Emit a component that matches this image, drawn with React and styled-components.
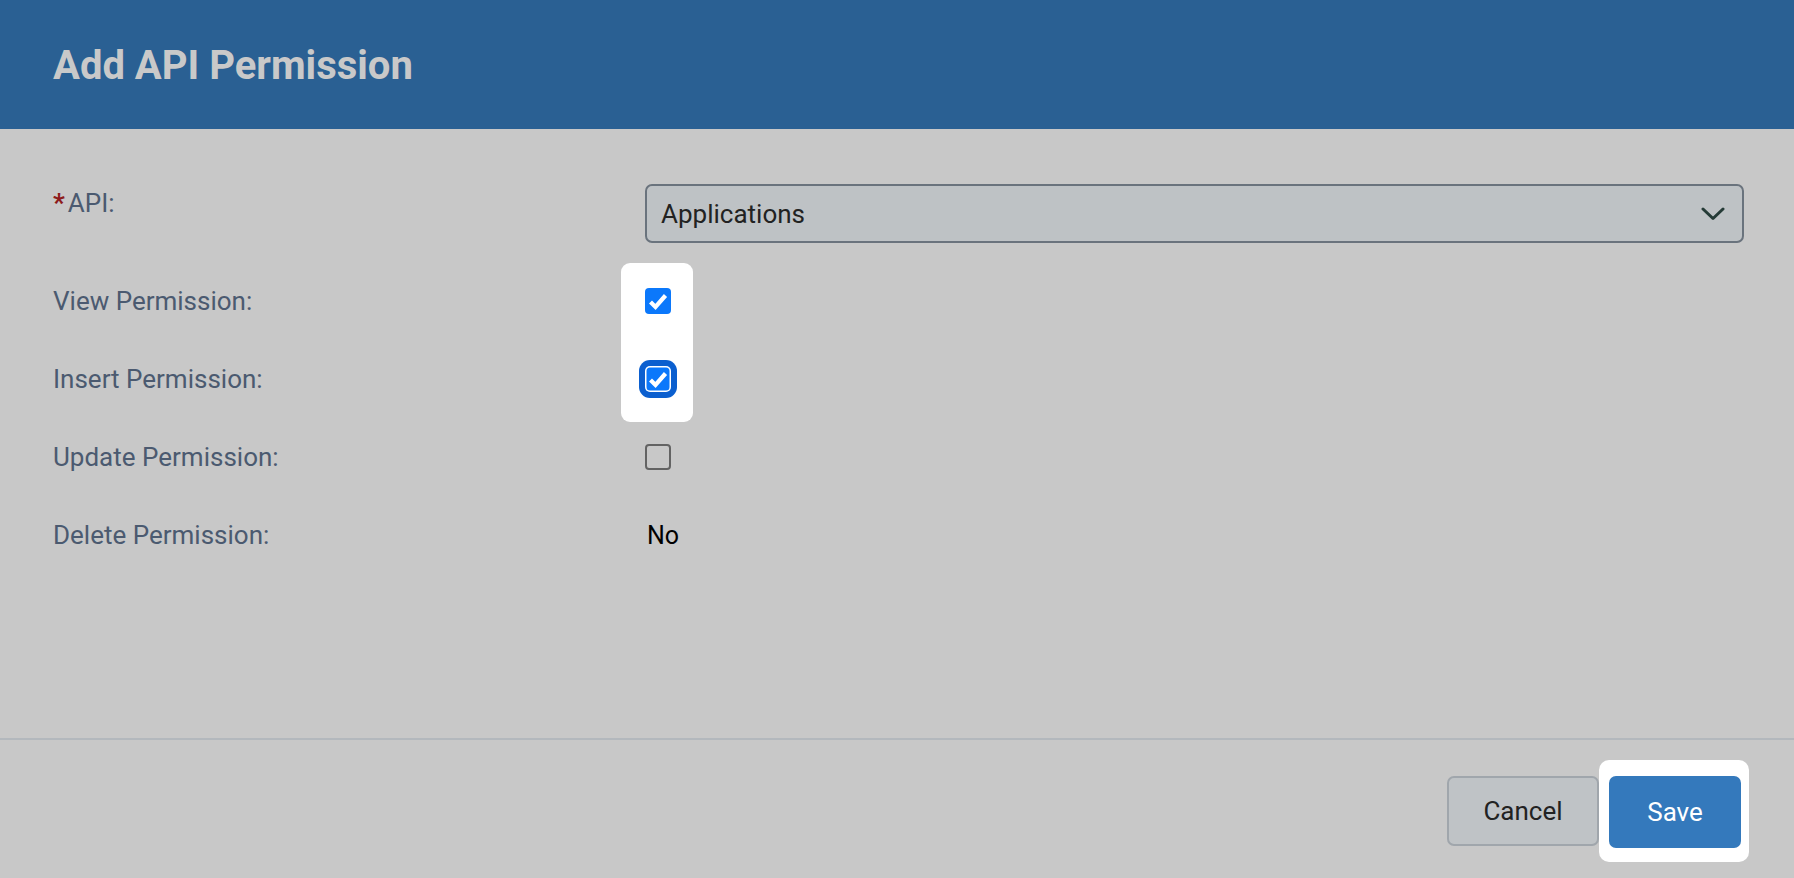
import styled, { createGlobalStyle } from "styled-components";

const GlobalStyle = createGlobalStyle`
  html, body {
    margin: 0;
    padding: 0;
    background: #c8c8c8;
    font-family: Roboto, "Liberation Sans", Arial, sans-serif;
  }
`;

function CheckMark() {
    return (
        <svg width="26" height="26" viewBox="0 0 26 26">
            <polyline points="5.5,14 10.5,19 20.5,7.5" fill="none" stroke="#fff" strokeWidth="4.2" strokeLinecap="butt" strokeLinejoin="miter" />
        </svg>
    );
}

function Chevron() {
    return (
        <svg width="24" height="14" viewBox="0 0 24 14">
            <polyline points="2,2 12,11.5 22,2" fill="none" stroke="#253b37" strokeWidth="3" strokeLinecap="round" strokeLinejoin="round" />
        </svg>
    );
}

function App() {
    return (
        <Page>
            <GlobalStyle />
            <Header>
                <Title>Add API Permission</Title>
            </Header>
            <Form>
                <Label $row={1} $top>
                    <Required>*</Required>API:
                </Label>
                <Select>
                    <span>Applications</span>
                    <Chevron />
                </Select>

                <Spotlight />

                <Label $row={2}>View Permission:</Label>
                <Cell $row={2}>
                    <CheckBox $checked><CheckMark /></CheckBox>
                </Cell>

                <Label $row={3}>Insert Permission:</Label>
                <Cell $row={3}>
                    <CheckBox $checked $focused><CheckMark /></CheckBox>
                </Cell>

                <Label $row={4}>Update Permission:</Label>
                <Cell $row={4}>
                    <CheckBox />
                </Cell>

                <Label $row={5}>Delete Permission:</Label>
                <Cell $row={5}>
                    <Value>No</Value>
                </Cell>
            </Form>
            <Footer>
                <CancelBtn>Cancel</CancelBtn>
                <SaveSpot>
                    <SaveBtn>Save</SaveBtn>
                </SaveSpot>
            </Footer>
        </Page>
    );
}

const Page = styled.div`
display: flex;
flex-direction: column;
min-height: 878px;
background: #c8c8c8;`

const Header = styled.div`
height: 129px;
display: flex;
align-items: center;
padding: 0 53px;
background: #2a6093;`

const Title = styled.h1`
margin: 0;
padding-top: 1px;
font-size: 40px;
font-weight: 700;
color: #c9c9c9;`

const Form = styled.div`
display: grid;
grid-template-columns: 592px 1fr;
grid-template-rows: 68px repeat(4, 58px);
row-gap: 20px;
align-content: start;
padding: 55px 50px 0 53px;
height: 611px;
box-sizing: border-box;
border-bottom: 2px solid #b3b8bd;`

const Label = styled.div`
grid-column: 1;
grid-row: ${p => p.$row};
align-self: ${p => (p.$top ? "start" : "center")};
padding-top: ${p => (p.$top ? "4px" : "0")};
font-size: 26px;
line-height: 31px;
color: #4b5a70;`

const Required = styled.span`
color: #8e1b1b;
font-weight: 700;
margin-right: 3px;`

const Select = styled.div`
grid-column: 2;
grid-row: 1;
align-self: start;
height: 59px;
box-sizing: border-box;
display: flex;
align-items: center;
justify-content: space-between;
padding: 0 17px 0 14px;
border: 2px solid #6a737d;
border-radius: 7px;
background: #bec2c5;
font-size: 26px;
color: #222;`

const Spotlight = styled.div`
grid-column: 2;
grid-row: 2 / 4;
justify-self: start;
width: 72px;
margin: -9px 0 -14px -24px;
background: #fff;
border-radius: 9px;`

const Cell = styled.div`
grid-column: 2;
grid-row: ${p => p.$row};
display: flex;
align-items: center;
position: relative;`

const CheckBox = styled.div`
width: 26px;
height: 26px;
box-sizing: border-box;
display: flex;
background: ${p => (p.$checked ? "#0b78fb" : "transparent")};
border: ${p => (p.$checked ? "none" : "2px solid #636363")};
box-shadow: ${p => (p.$focused ? "inset 0 0 0 1.5px #fff, 0 0 0 6px #0b5fcf" : "none")};
border-radius: ${p => (p.$focused ? "5px" : "4px")};`

const Value = styled.span`
font-size: 25px;
color: #000;
padding-left: 2px;`

const Footer = styled.div`
display: flex;
justify-content: flex-end;
align-items: center;
padding: 20px 45px 18px 0;`

const CancelBtn = styled.button`
width: 152px;
height: 70px;
box-sizing: border-box;
border: 2px solid #a0a6ac;
border-radius: 7px;
background: #bfc3c6;
font-family: inherit;
font-size: 26px;
color: #222;`

const SaveSpot = styled.div`
padding: 16px 8px 14px 10px;
background: #fff;
border-radius: 10px;`

const SaveBtn = styled.button`
display: block;
width: 132px;
height: 72px;
border: none;
border-radius: 7px;
background: #3479bc;
font-family: inherit;
font-size: 26px;
color: #fff;`

export default App;
